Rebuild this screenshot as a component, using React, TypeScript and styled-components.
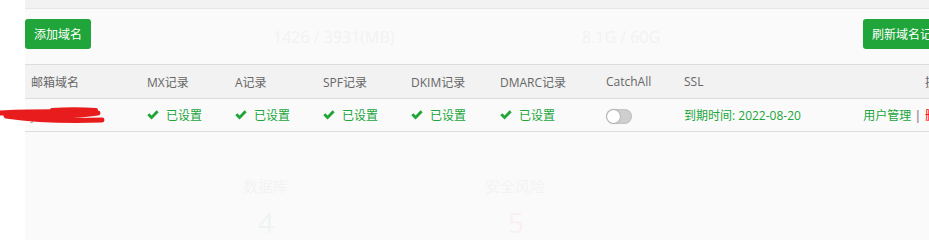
import React from "react";
import styled, { createGlobalStyle } from "styled-components";

const Global = createGlobalStyle`
  html, body { margin: 0; padding: 0; background: #fff; overflow: hidden; }
  body { font-family: "Open Sans", "Noto Sans CJK SC", sans-serif; }
`;

const Page = styled.div`
  width: 929px;
  height: 240px;
  padding-left: 25px;
  box-sizing: border-box;
  overflow: hidden;
  background: #fff;
`;

const Main = styled.div`
  position: relative;
  width: 928px;
  height: 240px;
  background: #fafafa;
  display: flex;
  flex-direction: column;
`;

const TopBand = styled.div`
  height: 8px;
  background: #f2f2f2;
  border-bottom: 1px solid #e6e6e6;
`;

const Ghost = styled.div<{ $x: number; $y: number; $size: number; $color: string }>`
  position: absolute;
  left: ${(p) => p.$x}px;
  top: ${(p) => p.$y}px;
  font-size: ${(p) => p.$size}px;
  color: ${(p) => p.$color};
  font-family: "Open Sans", "Noto Sans CJK SC", sans-serif;
  line-height: 1;
  white-space: nowrap;
`;

const Toolbar = styled.div`
  position: relative;
  display: flex;
  justify-content: space-between;
  padding-top: 10px;
`;

const Button = styled.button`
  height: 30px;
  padding: 0 9px;
  border: none;
  border-radius: 3px;
  background: #20a53a;
  color: #fff;
  font-family: "Noto Sans CJK SC", sans-serif;
  font-size: 12px;
  line-height: 30px;
  white-space: nowrap;
  cursor: pointer;
`;

const Table = styled.table`
  position: relative;
  margin-top: 15px;
  width: 928px;
  border-collapse: collapse;
  table-layout: fixed;
  font-size: 12px;
`;

const HeadRow = styled.tr`
  background: #f2f2f2;
  border-top: 1px solid #dddddd;
  border-bottom: 1px solid #dddddd;
`;

const Th = styled.th<{ $right?: boolean }>`
  height: 33px;
  padding: 0 ${(p) => (p.$right ? "4px" : "6px")};
  text-align: ${(p) => (p.$right ? "right" : "left")};
  font-weight: normal;
  color: #666;
  white-space: nowrap;
  overflow: hidden;
`;

const BodyRow = styled.tr`
  border-bottom: 1px solid #dddddd;
`;

const Td = styled.td<{ $right?: boolean }>`
  height: 32px;
  padding: 0 ${(p) => (p.$right ? "4px" : "6px")};
  text-align: ${(p) => (p.$right ? "right" : "left")};
  color: #20a53a;
  white-space: nowrap;
  overflow: hidden;
  vertical-align: middle;
`;

const DomainCell = styled(Td)`
  color: #999;
  overflow: visible;
  position: relative;
`;

const Status = styled.span`
  display: inline-flex;
  align-items: center;
  gap: 7px;
  color: #20a53a;
  font-family: "Noto Sans CJK SC", sans-serif;
`;

const Switch = styled.span`
  display: inline-block;
  position: relative;
  width: 26px;
  height: 15px;
  border-radius: 8px;
  background: #cfcfcf;
  box-shadow: inset 0 0 2px rgba(0, 0, 0, 0.2);
  vertical-align: middle;
  &::after {
    content: "";
    position: absolute;
    left: 1px;
    top: 1px;
    width: 13px;
    height: 13px;
    border-radius: 50%;
    background: #fff;
    box-shadow: 0 0 2px rgba(0, 0, 0, 0.35);
  }
`;

const Link = styled.a<{ $danger?: boolean }>`
  color: ${(p) => (p.$danger ? "#ff0000" : "#20a53a")};
  text-decoration: none;
  font-family: "Noto Sans CJK SC", sans-serif;
`;

const Sep = styled.span`
  color: #999;
  font-weight: bold;
  margin: 0 4px 0 3px;
`;

const Scribble = styled.svg`
  position: absolute;
  left: -31px;
  top: 8px;
  overflow: visible;
`;

const Check = () => (
  <svg width="12" height="10" viewBox="0 0 12 10">
    <path d="M0.3 5.2 L2.3 3.2 L4.6 5.4 L9.6 0.3 L11.7 2.3 L4.6 9.4 Z" fill="#20a53a" />
  </svg>
);

const Set = () => (
  <Status>
    <Check />
    已设置
  </Status>
);

export default function App() {
  return (
    <>
      <Global />
      <Page>
        <Main>
          <TopBand />
          <Ghost $x={248} $y={29} $size={16} $color="#f2f2f2">1426 / 3931(MB)</Ghost>
          <Ghost $x={557} $y={29} $size={16} $color="#f2f2f2">8.1G / 60G</Ghost>
          <Ghost $x={218} $y={179} $size={15} $color="#f3f3f3">数据库</Ghost>
          <Ghost $x={233} $y={208} $size={28} $color="#f0f4f1">4</Ghost>
          <Ghost $x={460} $y={179} $size={15} $color="#f3f3f3">安全风险</Ghost>
          <Ghost $x={483} $y={208} $size={28} $color="#f8f1f0">5</Ghost>
          <Toolbar>
            <Button>添加域名</Button>
            <Button>刷新域名记录</Button>
          </Toolbar>
          <Table>
            <colgroup>
              <col style={{ width: 116 }} />
              <col style={{ width: 88 }} />
              <col style={{ width: 88 }} />
              <col style={{ width: 88 }} />
              <col style={{ width: 89 }} />
              <col style={{ width: 106 }} />
              <col style={{ width: 78 }} />
              <col style={{ width: 160 }} />
              <col />
            </colgroup>
            <thead>
              <HeadRow>
                <Th>邮箱域名</Th>
                <Th>MX记录</Th>
                <Th>A记录</Th>
                <Th>SPF记录</Th>
                <Th>DKIM记录</Th>
                <Th>DMARC记录</Th>
                <Th>CatchAll</Th>
                <Th>SSL</Th>
                <Th $right>操作</Th>
              </HeadRow>
            </thead>
            <tbody>
              <BodyRow>
                <DomainCell>
                  j.........n
                  <Scribble width="112" height="16" viewBox="0 0 112 16">
                    <path
                      d="M3 6 C 30 5, 70 4, 104 6 C 85 9, 45 11, 12 9 C 40 13, 80 14, 108 13"
                      stroke="#e81c1c"
                      strokeWidth="5"
                      fill="none"
                      strokeLinecap="round"
                      strokeLinejoin="round"
                    />
                    <path d="M58 3 C 72 2, 88 2, 102 3" stroke="#e81c1c" strokeWidth="4" fill="none" strokeLinecap="round" />
                  </Scribble>
                </DomainCell>
                <Td><Set /></Td>
                <Td><Set /></Td>
                <Td><Set /></Td>
                <Td><Set /></Td>
                <Td><Set /></Td>
                <Td><Switch /></Td>
                <Td>到期时间: 2022-08-20</Td>
                <Td $right>
                  <Link>用户管理</Link>
                  <Sep>|</Sep>
                  <Link $danger>删除</Link>
                </Td>
              </BodyRow>
            </tbody>
          </Table>
        </Main>
      </Page>
    </>
  );
}
